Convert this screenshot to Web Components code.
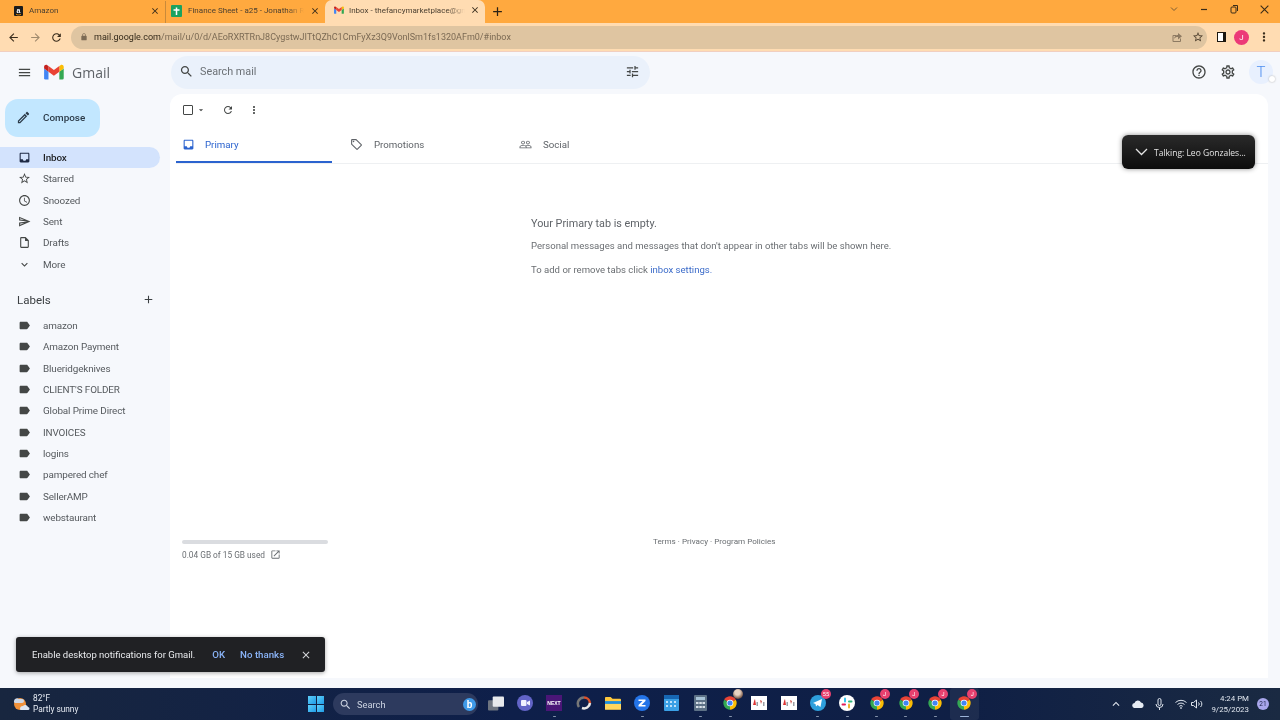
<!DOCTYPE html>
<html lang="en">
  <head>
    <meta charset="UTF-8" />
    <title>Inbox - Gmail</title>
    <style>
      html, body { margin: 0; height: 100%; }
      body {
        width: 1280px;
        height: 720px;
        overflow: hidden;
        position: relative;
        display: flex;
        flex-direction: column;
        font-family: Roboto, "Liberation Sans", sans-serif;
        filter: blur(0.3px);
      }
    </style>
  </head>
  <body>
    <browser-tabs>
      <browser-tab favicon="amazon">Amazon</browser-tab>
      <browser-tab favicon="sheets" sep>Finance Sheet - a25 - Jonathan Rodriguez</browser-tab>
      <browser-tab favicon="gmail" active>Inbox - thefancymarketplace@gmail.com</browser-tab>
    </browser-tabs>
    <browser-toolbar></browser-toolbar>

    <gmail-app>
      <gmail-header slot="header"></gmail-header>
      <gmail-sidebar slot="side">
        <nav-item icon="inbox" active>Inbox</nav-item>
        <nav-item icon="star">Starred</nav-item>
        <nav-item icon="clock">Snoozed</nav-item>
        <nav-item icon="send">Sent</nav-item>
        <nav-item icon="draft">Drafts</nav-item>
        <nav-item icon="expand">More</nav-item>
        <labels-head></labels-head>
        <nav-item icon="label">amazon</nav-item>
        <nav-item icon="label">Amazon Payment</nav-item>
        <nav-item icon="label">Blueridgeknives</nav-item>
        <nav-item icon="label">CLIENT'S FOLDER</nav-item>
        <nav-item icon="label">Global Prime Direct</nav-item>
        <nav-item icon="label">INVOICES</nav-item>
        <nav-item icon="label">logins</nav-item>
        <nav-item icon="label">pampered chef</nav-item>
        <nav-item icon="label">SellerAMP</nav-item>
        <nav-item icon="label">webstaurant</nav-item>
      </gmail-sidebar>
      <mail-panel slot="main"></mail-panel>
    </gmail-app>

    <task-bar></task-bar>

    <talking-pill>Talking: Leo Gonzales...</talking-pill>
    <snack-bar>Enable desktop notifications for Gmail.</snack-bar>

    <script>
      const ICONS = {
        menu: "M3 18h18v-2H3v2zm0-5h18v-2H3v2zm0-7v2h18V6H3z",
        search: "M15.5 14h-.79l-.28-.27C15.41 12.59 16 11.11 16 9.5 16 5.91 13.09 3 9.5 3S3 5.91 3 9.5 5.91 16 9.5 16c1.61 0 3.09-.59 4.23-1.57l.27.28v.79l5 4.99L20.49 19l-4.99-5zm-6 0C7.01 14 5 11.99 5 9.5S7.01 5 9.5 5 14 7.01 14 9.5 11.99 14 9.5 14z",
        tune: "M3 17v2h6v-2H3zM3 5v2h10V5H3zm10 16v-2h8v-2h-8v-2h-2v6h2zM7 9v2H3v2h4v2h2V9H7zm14 4v-2H11v2h10zm-6-4h2V7h4V5h-4V3h-2v6z",
        help: "M11 18h2v-2h-2v2zm1-16C6.48 2 2 6.48 2 12s4.48 10 10 10 10-4.48 10-10S17.52 2 12 2zm0 18c-4.41 0-8-3.59-8-8s3.59-8 8-8 8 3.59 8 8-3.59 8-8 8zm0-14c-2.21 0-4 1.79-4 4h2c0-1.1.9-2 2-2s2 .9 2 2c0 2-3 1.75-3 5h2c0-2.25 3-2.5 3-5 0-2.21-1.79-4-4-4z",
        edit: "M3 17.25V21h3.75L17.81 9.94l-3.75-3.75L3 17.25zM5.92 19H5v-.92l9.06-9.06.92.92L5.92 19zM20.71 7.04c.39-.39.39-1.02 0-1.41l-2.34-2.34c-.39-.39-1.02-.39-1.41 0l-1.83 1.83 3.75 3.75 1.83-1.83z",
        inbox: "M19 3H5c-1.1 0-2 .9-2 2v14c0 1.1.9 2 2 2h14c1.1 0 2-.9 2-2V5c0-1.1-.9-2-2-2zm0 12h-4c0 1.66-1.34 3-3 3s-3-1.34-3-3H5V5h14v10z",
        star: "M22 9.24l-7.19-.62L12 2 9.19 8.63 2 9.24l5.46 4.73L5.82 21 12 17.27 18.18 21l-1.63-7.03L22 9.24zM12 15.4l-3.76 2.27 1-4.28-3.32-2.88 4.38-.38L12 6.1l1.71 4.04 4.38.38-3.32 2.88 1 4.28L12 15.4z",
        clock: "M11.99 2C6.47 2 2 6.48 2 12s4.47 10 9.99 10C17.52 22 22 17.52 22 12S17.52 2 11.99 2zM12 20c-4.42 0-8-3.58-8-8s3.58-8 8-8 8 3.58 8 8-3.58 8-8 8zm.5-13H11v6l5.25 3.15.75-1.23-4.5-2.67z",
        send: "M4.01 6.03l7.51 3.22-7.52-1 .01-2.22m7.5 8.72L4 17.97v-2.22l7.51-1M2.01 3L2 10l15 2-15 2 .01 7L23 12 2.01 3z",
        draft: "M14 2H6c-1.1 0-1.99.9-1.99 2L4 20c0 1.1.89 2 1.99 2H18c1.1 0 2-.9 2-2V8l-6-6zm4 18H6V4h7v5h5v11z",
        expand: "M16.59 8.59L12 13.17 7.41 8.59 6 10l6 6 6-6z",
        label: "M17.63 5.84C17.27 5.33 16.67 5 16 5L5 5.01C3.9 5.01 3 5.9 3 7v10c0 1.1.9 1.99 2 1.99L16 19c.67 0 1.27-.33 1.63-.84L22 12l-4.37-6.16z",
        add: "M19 13h-6v6h-2v-6H5v-2h6V5h2v6h6v2z",
        refresh: "M17.65 6.35C16.2 4.9 14.21 4 12 4c-4.42 0-7.99 3.58-7.99 8s3.57 8 7.99 8c3.73 0 6.84-2.55 7.73-6h-2.08c-.82 2.33-3.04 4-5.65 4-3.31 0-6-2.69-6-6s2.69-6 6-6c1.66 0 3.14.69 4.22 1.78L13 11h7V4l-2.35 2.35z",
        dots: "M12 8c1.1 0 2-.9 2-2s-.9-2-2-2-2 .9-2 2 .9 2 2 2zm0 2c-1.1 0-2 .9-2 2s.9 2 2 2 2-.9 2-2-.9-2-2-2zm0 6c-1.1 0-2 .9-2 2s.9 2 2 2 2-.9 2-2-.9-2-2-2z",
        tag: "M21.41 11.58l-9-9C12.05 2.22 11.55 2 11 2H4c-1.1 0-2 .9-2 2v7c0 .55.22 1.05.59 1.42l9 9c.36.36.86.58 1.41.58s1.05-.22 1.41-.59l7-7c.37-.36.59-.86.59-1.41s-.23-1.06-.59-1.42zM13 20.01L4 11V4h7v-.01l9 9-7 7.02zM6.5 5a1.5 1.5 0 1 0 0 3 1.5 1.5 0 0 0 0-3z",
        people: "M16.5 13c-1.2 0-3.07.34-4.5 1-1.43-.67-3.3-1-4.5-1C5.33 13 1 14.08 1 16.25V19h22v-2.75c0-2.17-4.33-3.25-6.5-3.25zm-4 4.5h-10v-1.25c0-.54 2.56-1.75 5-1.75s5 1.21 5 1.75v1.25zm9 0H14v-1.25c0-.46-.2-.86-.52-1.22.88-.3 1.96-.53 3.02-.53 2.44 0 5 1.21 5 1.75v1.25zM7.5 12c1.93 0 3.5-1.57 3.5-3.5S9.43 5 7.5 5 4 6.57 4 8.5 5.57 12 7.5 12zm0-5.5c1.1 0 2 .9 2 2s-.9 2-2 2-2-.9-2-2 .9-2 2-2zm9 5.5c1.93 0 3.5-1.57 3.5-3.5S18.43 5 16.5 5 13 6.57 13 8.5s1.57 3.5 3.5 3.5zm0-5.5c1.1 0 2 .9 2 2s-.9 2-2 2-2-.9-2-2 .9-2 2-2z",
        open: "M19 19H5V5h7V3H5c-1.11 0-2 .9-2 2v14c0 1.1.89 2 2 2h14c1.1 0 2-.9 2-2v-7h-2v7zM14 3v2h3.59l-9.83 9.83 1.41 1.41L19 6.41V10h2V3h-7z",
        close: "M19 6.41L17.59 5 12 10.59 6.41 5 5 6.41 10.59 12 5 17.59 6.41 19 12 13.41 17.59 19 19 17.59 13.41 12z",
        back: "M20 11H7.83l5.59-5.59L12 4l-8 8 8 8 1.41-1.41L7.83 13H20v-2z",
        forward: "M12 4l-1.41 1.41L16.17 11H4v2h12.17l-5.58 5.59L12 20l8-8z",
        lock: "M18 8h-1V6c0-2.76-2.24-5-5-5S7 3.24 7 6v2H6c-1.1 0-2 .9-2 2v10c0 1.1.9 2 2 2h12c1.1 0 2-.9 2-2V10c0-1.1-.9-2-2-2zM9 6c0-1.66 1.34-3 3-3s3 1.34 3 3v2H9V6z",
        share: "M5 8h5v2H5v10h13v-5h2v5a2 2 0 0 1-2 2H5a2 2 0 0 1-2-2V10a2 2 0 0 1 2-2zm9 1V4l8 6.500-8 6.500v-5c-4 0-6 1-8 4 .5-4.500 3-8 8-8.500z",
        carrot: "M7 10l5 5 5-5z",
        gear: "M19.43 12.98c.04-.32.07-.64.07-.98s-.03-.66-.07-.98l2.11-1.65c.19-.15.24-.42.12-.64l-2-3.46c-.12-.22-.39-.3-.61-.22l-2.49 1c-.52-.4-1.08-.73-1.69-.98l-.38-2.65A.49.49 0 0 0 14 2h-4c-.25 0-.46.18-.49.42l-.38 2.65c-.61.25-1.17.59-1.69.98l-2.49-1c-.23-.09-.49 0-.61.22l-2 3.46c-.13.22-.07.49.12.64l2.11 1.65c-.04.32-.07.65-.07.98s.03.66.07.98l-2.11 1.65c-.19.15-.24.42-.12.64l2 3.46c.12.22.39.3.61.22l2.49-1c.52.4 1.08.73 1.69.98l.38 2.65c.03.24.24.42.49.42h4c.25 0 .46-.18.49-.42l.38-2.65c.61-.25 1.17-.59 1.69-.98l2.49 1c.23.09.49 0 .61-.22l2-3.46c.12-.22.07-.49-.12-.64l-2.11-1.65zm-1.98-1.71c.04.31.05.52.05.73s-.02.43-.05.73l-.14 1.13.89.7 1.08.84-.7 1.21-1.27-.51-1.04-.42-.9.68c-.43.32-.84.56-1.25.73l-1.06.43-.16 1.13-.2 1.35h-1.4l-.19-1.35-.16-1.13-1.06-.43c-.43-.18-.83-.41-1.23-.71l-.91-.7-1.06.43-1.27.51-.7-1.21 1.08-.84.89-.7-.14-1.13c-.03-.31-.05-.54-.05-.74s.02-.43.05-.73l.14-1.13-.89-.7-1.08-.84.7-1.21 1.27.51 1.04.42.9-.68c.43-.32.84-.56 1.25-.73l1.06-.43.16-1.13.2-1.35h1.39l.19 1.35.16 1.13 1.06.43c.43.18.83.41 1.23.71l.91.7 1.06-.43 1.27-.51.7 1.21-1.07.85-.89.7.14 1.13zM12 8c-2.21 0-4 1.79-4 4s1.79 4 4 4 4-1.79 4-4-1.79-4-4-4zm0 6c-1.1 0-2-.9-2-2s.9-2 2-2 2 .9 2 2-.9 2-2 2z",
      };

      const GMAIL_LOGO = `<svg viewBox="0 0 52 42" width="20" height="16">
        <path fill="#4285f4" d="M3.500 41h8V20.500L0 12v25.500A3.500 3.500 0 0 0 3.500 41"/>
        <path fill="#34a853" d="M40 41h8a3.500 3.500 0 0 0 3.500-3.500V12L40 20.500"/>
        <path fill="#fbbc04" d="M40 5.500v15L51.500 12V7.500c0-4.300-4.900-6.700-8.300-4.200"/>
        <path fill="#ea4335" d="M11.500 20.500v-15L25.750 16 40 5.500v15L25.750 31"/>
        <path fill="#c5221f" d="M0 7.500V12l11.500 8.500v-15L8.300 3.300C4.900.8 0 3.200 0 7.500"/>
      </svg>`;

      const CHROME_LOGO = `<svg viewBox="0 0 24 24" width="100%" height="100%">
        <path fill="#ea4335" d="M12 12 3.340 7A10 10 0 0 1 20.660 7Z"/>
        <path fill="#fbbc04" d="M12 12 20.660 7A10 10 0 0 1 12 22Z"/>
        <path fill="#34a853" d="M12 12 12 22A10 10 0 0 1 3.340 7Z"/>
        <circle cx="12" cy="12" r="5" fill="#fff"/><circle cx="12" cy="12" r="3.900" fill="#4285f4"/>
      </svg>`;

      class GIcon extends HTMLElement {
        constructor() {
          super();
          this.attachShadow({ mode: "open" });
        }
        connectedCallback() {
          const size = this.getAttribute("size") || 14;
          const path = ICONS[this.getAttribute("name")];
          this.shadowRoot.innerHTML = `
            <style>
              :host { display: inline-flex; flex: none; width: ${size}px; height: ${size}px; color: inherit; }
              svg { display: block; width: 100%; height: 100%; fill: currentColor; }
            </style>
            <svg viewBox="0 0 24 24"><path d="${path}"></path></svg>`;
        }
      }
      customElements.define("g-icon", GIcon);

      class BrowserTabs extends HTMLElement {
        constructor() {
          super();
          this.attachShadow({ mode: "open" });
          this.shadowRoot.innerHTML = `
            <style>
              :host { display: flex; flex: none; height: 23px; background: #ffa93f; align-items: flex-end; padding: 0 1px 0 5px; color: #3c3327; }
              .plus { margin-left: 5px; align-self: center; color: #2b2114; display: flex; }
              .win { margin-left: auto; display: flex; align-self: flex-start; height: 18px; align-items: center; color: #5b4426; }
              .win span { width: 30px; display: flex; justify-content: center; }
            </style>
            <slot></slot>
            <div class="plus"><g-icon name="add" size="15"></g-icon></div>
            <div class="win">
              <span><svg width="10" height="10" viewBox="0 0 10 10" fill="none" stroke="#7a5c33" stroke-width="1"><path d="M2 3.500 5 6.500 8 3.500"/></svg></span>
              <span><svg width="10" height="10" viewBox="0 0 10 10" stroke="#3a2c18" stroke-width="1.200"><path d="M2 5.500H8"/></svg></span>
              <span><svg width="10" height="10" viewBox="0 0 10 10" fill="none" stroke="#3a2c18" stroke-width="1"><rect x="2" y="3" width="5" height="6" rx="1"/><path d="M4 1.500H8.500V7"/></svg></span>
              <span><svg width="11" height="11" viewBox="0 0 10 10" stroke="#3a2c18" stroke-width="1"><path d="M1.500 1.500 8.500 8.500M8.500 1.500 1.500 8.500"/></svg></span>
            </div>`;
        }
      }
      customElements.define("browser-tabs", BrowserTabs);

      const FAVICONS = {
        amazon: `<svg width="9" height="10" viewBox="0 0 9 10"><rect width="9" height="10" rx="1" fill="#1c1c1c"/><text x="4.500" y="6.800" font-size="7" font-family="Liberation Sans" font-weight="700" fill="#fff" text-anchor="middle">a</text><path d="M2 8.300c1.500.8 3.500.8 5 0" stroke="#f90" stroke-width=".8" fill="none"/></svg>`,
        sheets: `<svg width="11" height="12" viewBox="0 0 11 12"><rect width="11" height="12" rx="1" fill="#1aa260"/><path d="M5.500 2.500V10M2.500 5H8.500" stroke="#fff" stroke-width="1.500"/></svg>`,
        gmail: GMAIL_LOGO.replace('width="20" height="16"', 'width="10" height="8"'),
      };

      class BrowserTab extends HTMLElement {
        constructor() {
          super();
          this.attachShadow({ mode: "open" });
        }
        connectedCallback() {
          const active = this.hasAttribute("active");
          const sep = this.hasAttribute("sep");
          this.shadowRoot.innerHTML = `
            <style>
              :host { display: flex; align-items: center; gap: ${active ? 5 : 6}px; width: 160px; box-sizing: border-box; height: ${active ? 23 : 22}px; padding: 0 5px 3px ${sep ? 5 : 9}px; font-size: 8px; color: #4a3f30; position: relative; background: ${active ? "#ffdcb2" : "transparent"}; border-radius: ${active ? "7px 7px 0 0" : "0"}; border-left: ${sep ? "1px solid #c98a3a" : "0"}; }
              .title { flex: 1; min-width: 0; white-space: nowrap; overflow: hidden; -webkit-mask-image: linear-gradient(90deg, #000 85%, transparent); mask-image: linear-gradient(90deg, #000 85%, transparent); }
              g-icon { color: #33291a; }
              .fav { display: flex; flex: none; }
            </style>
            <span class="fav">${FAVICONS[this.getAttribute("favicon")]}</span>
            <span class="title"><slot></slot></span>
            <g-icon name="close" size="10"></g-icon>`;
        }
      }
      customElements.define("browser-tab", BrowserTab);

      class BrowserToolbar extends HTMLElement {
        constructor() {
          super();
          this.attachShadow({ mode: "open" });
          this.shadowRoot.innerHTML = `
            <style>
              :host { display: flex; flex: none; height: 28px; box-sizing: content-box; align-items: center; background: #ffdcb2; border-bottom: 1px solid #f1cfc0; padding: 0 7px; color: #3a2d1c; }
              .nav { display: flex; gap: 8.500px; margin-right: 8px; align-items: center; }
              .nav g-icon:nth-child(2) { color: #a08a6c; }
              .url { flex: none; width: 1136px; height: 23px; border-radius: 12px; background: #dfc5a1; display: flex; align-items: center; padding: 0 3px 0 9px; box-sizing: border-box; gap: 6px; font-size: 9px; color: #7b6a54; white-space: nowrap; }
              .url b { font-weight: 400; color: #33291a; }
              .url .tools { margin-left: auto; display: flex; gap: 9px; align-items: center; color: #8d7a62; }
              .url .tools g-icon:last-child { color: #4d3f2d; }
              .right { display: flex; align-items: center; margin-left: 10px; gap: 8px; }
              .avatar { width: 15px; height: 15px; border-radius: 50%; background: #ec3a78; color: #fff; font-size: 8px; display: flex; align-items: center; justify-content: center; }
              .panel { width: 5px; height: 8px; border: 1.500px solid #1d1810; border-right-width: 3.500px; background: #fff; }
            </style>
            <div class="nav">
              <g-icon name="back" size="13"></g-icon>
              <g-icon name="forward" size="13"></g-icon>
              <g-icon name="refresh" size="13"></g-icon>
            </div>
            <div class="url">
              <g-icon name="lock" size="8"></g-icon>
              <span><b>mail.google.com</b>/mail/u/0/d/AEoRXRTRnJ8CygstwJITtQZhC1CmFyXz3Q9VonlSm1fs1320AFm0/#inbox</span>
              <div class="tools"><g-icon name="share" size="12"></g-icon><g-icon name="star" size="12"></g-icon></div>
            </div>
            <div class="right">
              <div class="panel"></div>
              <div class="avatar">J</div>
              <g-icon name="dots" size="14"></g-icon>
            </div>`;
        }
      }
      customElements.define("browser-toolbar", BrowserToolbar);

      class GmailApp extends HTMLElement {
        constructor() {
          super();
          this.attachShadow({ mode: "open" });
          this.shadowRoot.innerHTML = `
            <style>
              :host { display: grid; flex: 1; min-height: 0; grid-template-columns: 170px 1098px 12px; grid-template-rows: 42px 584px 10px; background: #f6f8fc; }
              .head { grid-column: 1 / -1; }
              .side { grid-row: 2 / 4; }
            </style>
            <div class="head"><slot name="header"></slot></div>
            <div class="side"><slot name="side"></slot></div>
            <slot name="main"></slot>`;
        }
      }
      customElements.define("gmail-app", GmailApp);

      class GmailHeader extends HTMLElement {
        constructor() {
          super();
          this.attachShadow({ mode: "open" });
          this.shadowRoot.innerHTML = `
            <style>
              :host { display: flex; height: 40px; align-items: center; color: #444746; }
              .brand { width: 171px; flex: none; display: flex; align-items: center; padding-left: 17px; box-sizing: border-box; }
              .brand g-icon { margin-right: 12px; }
              .brand span { font: 400 14px "Open Sans", Roboto, sans-serif; color: #5f6368; margin-left: 8px; }
              .brand svg { display: block; }
              .search { width: 479px; height: 33px; background: #eaf1fb; border-radius: 17px; display: flex; align-items: center; padding: 0 10px 1px 8px; box-sizing: border-box; font-size: 10.800px; color: #6b7075; }
              .search g-icon:first-child { margin: 0 6px 0 0; color: #444746; }
              .search g-icon:last-child { color: #444746; }
              .search span { flex: 1; }
              .tools { margin-left: auto; display: flex; align-items: center; padding-right: 7px; }
              .tools g-icon:nth-child(2) { margin: 0 13px 0 13px; }
              .me { width: 24px; height: 24px; border-radius: 50%; background: #e8f0fe; color: #4c8df0; font-size: 15px; font-weight: 300; display: flex; align-items: center; justify-content: center; position: relative; }
              .me i { position: absolute; right: -2px; bottom: 2px; width: 6px; height: 6px; background: #fff; border-radius: 50%; box-shadow: 0 0 2px #aaa; }
            </style>
            <div class="brand">
              <g-icon name="menu" size="15"></g-icon>
              ${GMAIL_LOGO}
              <span>Gmail</span>
            </div>
            <div class="search">
              <g-icon name="search" size="15"></g-icon>
              <span>Search mail</span>
              <g-icon name="tune" size="15"></g-icon>
            </div>
            <div class="tools">
              <g-icon name="help" size="16"></g-icon>
              <g-icon name="gear" size="16"></g-icon>
              <div class="me">T<i></i></div>
            </div>`;
        }
      }
      customElements.define("gmail-header", GmailHeader);

      class GmailSidebar extends HTMLElement {
        constructor() {
          super();
          this.attachShadow({ mode: "open" });
          this.shadowRoot.innerHTML = `
            <style>
              :host { display: block; padding-top: 5px; }
              .compose { width: 95px; height: 38px; margin: 0 0 10px 5px; border-radius: 13px; background: #c2e7ff; display: flex; align-items: center; padding: 0 0 1px 11px; box-sizing: border-box; gap: 12px; font-size: 9.900px; font-weight: 500; color: #2b3a48; }
            </style>
            <div class="compose"><g-icon name="edit" size="15"></g-icon>Compose</div>
            <slot></slot>`;
        }
      }
      customElements.define("gmail-sidebar", GmailSidebar);

      class NavItem extends HTMLElement {
        constructor() {
          super();
          this.attachShadow({ mode: "open" });
        }
        connectedCallback() {
          const active = this.hasAttribute("active");
          this.shadowRoot.innerHTML = `
            <style>
              :host { display: flex; align-items: center; width: 160px; height: 21.330px; box-sizing: border-box; padding-left: 17.500px; gap: 12.500px; font-size: 9.900px; letter-spacing: -0.12px; color: ${active ? "#1f2124" : "#55595d"}; font-weight: ${active ? 500 : 400}; border-radius: 0 11px 11px 0; background: ${active ? "#d3e3fd" : "transparent"}; }
              g-icon { color: ${active ? "#1f2a44" : "#444746"}; }
            </style>
            <g-icon name="${this.getAttribute("icon")}" size="13"></g-icon>
            <slot></slot>`;
        }
      }
      customElements.define("nav-item", NavItem);

      class LabelsHead extends HTMLElement {
        constructor() {
          super();
          this.attachShadow({ mode: "open" });
          this.shadowRoot.innerHTML = `
            <style>
              :host { display: flex; align-items: center; width: 155px; box-sizing: border-box; height: 40px; padding: 10px 0 0 17px; font-size: 11.500px; color: #3c4043; justify-content: space-between; }
            </style>
            <span>Labels</span><g-icon name="add" size="13"></g-icon>`;
        }
      }
      customElements.define("labels-head", LabelsHead);

      class MailTab extends HTMLElement {
        constructor() {
          super();
          this.attachShadow({ mode: "open" });
        }
        connectedCallback() {
          const active = this.hasAttribute("active");
          this.shadowRoot.innerHTML = `
            <style>
              :host { display: flex; align-items: center; box-sizing: border-box; width: ${this.getAttribute("w") || 169}px; height: 36px; padding: 0 0 ${active ? 0 : 1}px ${this.getAttribute("p") || 6}px; gap: ${active ? 10 : 11}px; font-size: 9.700px; color: ${active ? "#2b63cf" : "#5f6368"}; position: relative; }
              :host([active]) { border-bottom: 2px solid #2b63cf; }
            </style>
            <g-icon name="${this.getAttribute("icon")}" size="13"></g-icon>
            <slot></slot>`;
        }
      }
      customElements.define("mail-tab", MailTab);

      class MailPanel extends HTMLElement {
        constructor() {
          super();
          this.attachShadow({ mode: "open" });
          this.shadowRoot.innerHTML = `
            <style>
              :host { display: flex; flex-direction: column; background: #fff; border-radius: 12px 12px 0 0; color: #5f6368; padding: 0 0 0 6px; height: 584px; box-sizing: border-box; }
              .bar { display: flex; align-items: center; height: 32px; padding: 0 0 1px 7px; box-sizing: border-box; margin-bottom: 1px; color: #444746; }
              .check { width: 8px; height: 8px; border: 1px solid #444746; border-radius: 1px; margin-left: 0; }
              .bar g-icon { color: #444746; }
              .tabs { display: flex; border-bottom: 1px solid #eef0f2; margin-right: 0; }
              .empty { padding: 53px 0 0 355px; }
              .empty h2 { margin: 0 0 8px; font-weight: 400; font-size: 10.800px; color: #5f6368; line-height: 14px; }
              .empty p { margin: 0 0 10px; font-size: 9.550px; line-height: 13.500px; color: #6a6e72; }
              .empty a { color: #3b6bc9; text-decoration: none; }
              .foot { display: flex; align-items: flex-start; margin-top: 254px; padding-left: 6px; }
              .storage { width: 146px; flex: none; font-size: 8.300px; color: #6a6e72; }
              .meter { height: 4px; background: #dadce0; border-radius: 2px; margin-bottom: 5px; }
              .use { display: flex; align-items: center; gap: 5px; }
              .links { font-size: 8.100px; margin: -3px 0 0 325px; line-height: 8px; color: #6a6e72; }
            </style>
            <div class="bar">
              <div class="check"></div>
              <g-icon name="carrot" size="10" style="margin:0 0 0 3px"></g-icon>
              <g-icon name="refresh" size="12" style="margin-left:16px"></g-icon>
              <g-icon name="dots" size="12" style="margin-left:14px"></g-icon>
            </div>
            <div class="tabs">
              <mail-tab active icon="inbox" w="156">Primary</mail-tab>
              <mail-tab icon="tag" w="169" p="18">Promotions</mail-tab>
              <mail-tab icon="people" w="169" p="18">Social</mail-tab>
            </div>
            <div class="empty">
              <h2>Your Primary tab is empty.</h2>
              <p>Personal messages and messages that don't appear in other tabs will be shown here.</p>
              <p>To add or remove tabs click <a>inbox settings.</a></p>
            </div>
            <div class="foot">
              <div class="storage">
                <div class="meter"></div>
                <div class="use"><span>0.04 GB of 15 GB used</span><g-icon name="open" size="11"></g-icon></div>
              </div>
              <div class="links">Terms · Privacy · Program Policies</div>
            </div>`;
        }
      }
      customElements.define("mail-panel", MailPanel);

      class TalkingPill extends HTMLElement {
        constructor() {
          super();
          this.attachShadow({ mode: "open" });
          this.shadowRoot.innerHTML = `
            <style>
              :host { position: absolute; left: 1122px; top: 135px; width: 133px; height: 34px; box-sizing: border-box; border-radius: 6px; background: linear-gradient(#2a2a2a, #0c0c0c); box-shadow: 0 0 5px rgba(0,0,0,.45); display: flex; align-items: center; padding-left: 13px; gap: 6px; font: 8.500px "Open Sans", sans-serif; color: #e4e4e4; white-space: nowrap; }
              svg { flex: none; }
            </style>
            <svg width="13" height="8" viewBox="0 0 13 8" fill="none" stroke="#e4e4e4" stroke-width="1.300"><path d="M1 1 6.500 6.500 12 1"/></svg>
            <slot></slot>`;
        }
      }
      customElements.define("talking-pill", TalkingPill);

      class SnackBar extends HTMLElement {
        constructor() {
          super();
          this.attachShadow({ mode: "open" });
          this.shadowRoot.innerHTML = `
            <style>
              :host { position: absolute; left: 16px; top: 637px; width: 309px; height: 35px; box-sizing: border-box; border-radius: 3px; background: #202124; box-shadow: 0 1px 4px rgba(0,0,0,.35); display: flex; align-items: center; padding-left: 16px; font-size: 9.500px; color: #e8eaed; white-space: nowrap; }
              a { color: #8ab4f8; font-weight: 500; font-size: 9.700px; }
              .ok { margin-left: 17px; }
              .no { margin-left: 15px; }
              g-icon { margin-left: 16px; color: #d5d7da; }
            </style>
            <slot></slot>
            <a class="ok">OK</a><a class="no">No thanks</a>
            <g-icon name="close" size="12"></g-icon>`;
        }
      }
      customElements.define("snack-bar", SnackBar);

      class TaskIcon extends HTMLElement {
        constructor() {
          super();
          this.attachShadow({ mode: "open" });
        }
        connectedCallback() {
          const badge = this.getAttribute("badge");
          const dot = this.hasAttribute("dot");
          const on = this.hasAttribute("on");
          const photo = this.hasAttribute("photo");
          this.shadowRoot.innerHTML = `
            <style>
              :host { display: flex; flex: none; width: 29.300px; height: 32px; align-items: center; justify-content: center; position: relative; ${on ? "background: rgba(255,255,255,.06); border-radius: 3px;" : ""} }
              .i { width: 16px; height: 16px; margin-top: -2px; display: flex; align-items: center; justify-content: center; position: relative; }
              .b { position: absolute; right: -5px; top: -6px; min-width: 10px; height: 10px; border-radius: 50%; background: ${photo ? "radial-gradient(circle at 45% 35%, #e9d3c2 30%, #6b4a3a 75%)" : "#e8416f"}; color: #fff; font-size: 5.500px; display: flex; align-items: center; justify-content: center; }
              .d { position: absolute; left: 50%; bottom: 3px; width: ${on ? 9 : 3}px; height: 1.500px; margin-left: ${on ? -4.5 : -1.5}px; border-radius: 1px; background: ${on ? "#9db4d8" : "#8593ab"}; }
            </style>
            <div class="i"><slot></slot>${badge ? `<span class="b">${badge}</span>` : ""}</div>
            ${dot || on ? '<span class="d"></span>' : ""}`;
        }
      }
      customElements.define("task-icon", TaskIcon);

      const FLAGS = `<svg width="16" height="14" viewBox="0 0 16 14"><rect width="16" height="14" fill="#fff"/><path fill="#d33" d="M2 9c1-3 1-5 2-6l1 6z"/><path fill="#c9504a" d="M9 4l1 4 1-3z"/><path fill="#9aa0a6" d="M5.500 6h1.500v4H5.500zM12 6h1.500v4H12z"/></svg>`;

      class TaskBar extends HTMLElement {
        constructor() {
          super();
          this.attachShadow({ mode: "open" });
          this.shadowRoot.innerHTML = `
            <style>
              :host { display: flex; flex: none; height: 32px; align-items: center; background: linear-gradient(90deg, #18263f, #0e1f4a 40%, #0f1f45 75%, #1a2a42); color: #e6ebf3; font-size: 8.300px; position: relative; }
              .weather { display: flex; align-items: center; gap: 3px; width: 308px; padding-left: 12px; box-sizing: border-box; flex: none; line-height: 11px; }
              .win { flex: none; width: 16px; height: 16px; display: grid; grid-template-columns: 1fr 1fr; gap: 1px; }
              .win i { background: linear-gradient(135deg, #5fd0fa, #1f9be6); }
              .search { width: 145px; flex: none; height: 22px; margin: 0 3px 0 9px; border-radius: 11px; background: #2d3a5e; display: flex; align-items: center; padding: 0 2px 0 6px; box-sizing: border-box; gap: 5px; font-size: 9.300px; color: #cdd4e2; }
              .search span { flex: 1; }
              .bing { width: 13px; height: 13px; border-radius: 50%; background: #3f9ae8; color: #fff; font: 700 10px/13px Roboto, sans-serif; text-align: center; }
              .apps { display: flex; }
              .tray { position: absolute; right: 0; top: 0; height: 32px; width: 172px; display: flex; align-items: center; box-sizing: border-box; color: #dfe5ee; }
              .tray > * { flex: none; }
              .clock { text-align: right; line-height: 11px; width: 38px; margin-left: 8px; font-size: 7.900px; }
              .count { width: 12px; height: 12px; border-radius: 50%; background: #a9a7ec; color: #1b2245; font-size: 6.500px; display: flex; align-items: center; justify-content: center; margin-left: 8px; }
            </style>
            <div class="weather">
              <svg width="18" height="16" viewBox="0 0 18 16"><circle cx="8" cy="8" r="6" fill="#f0913a"/><path d="M2 5a3 3 0 0 1 5-2h3a2 2 0 0 1 0 4H3a1.500 1.500 0 0 1-1-2z" fill="#cfd8e6"/><path d="M8 13a3 3 0 0 1 3-3 3 3 0 0 1 5 1 1.500 1.500 0 0 1 0 3H9a1 1 0 0 1-1-1z" fill="#dde5f1"/></svg>
              <div>82°F<br />Partly sunny</div>
            </div>
            <div class="win"><i></i><i></i><i></i><i></i></div>
            <div class="search">
              <g-icon name="search" size="13"></g-icon>
              <span>Search</span>
              <div class="bing">b</div>
            </div>
            <div class="apps">
              <task-icon><svg width="17" height="15" viewBox="0 0 17 15"><rect y="4" width="11" height="11" rx="1" fill="#6d7480"/><rect x="5" width="12" height="11" rx="1" fill="#e7e9ec"/></svg></task-icon>
              <task-icon><svg width="16" height="16" viewBox="0 0 16 16"><circle cx="8" cy="8" r="8" fill="#6264c7"/><rect x="4" y="5" width="5.500" height="6" rx="1" fill="#f0f0ff"/><path d="M10 7l3-1.500v5L10 9z" fill="#f0f0ff"/></svg></task-icon>
              <task-icon dot><svg width="16" height="16" viewBox="0 0 16 16"><rect width="16" height="16" fill="#4a1677"/><text x="8" y="10" font-size="5" font-weight="700" font-family="Liberation Sans" fill="#fff" text-anchor="middle">NEXT</text></svg></task-icon>
              <task-icon><svg width="16" height="16" viewBox="0 0 16 16" fill="none" stroke-width="2.500"><path d="M3 12A6 6 0 0 1 8 2.500" stroke="#777"/><path d="M8 2.500A6 6 0 0 1 14 8" stroke="#d9512c"/><path d="M14 8a6 6 0 0 1-8 5" stroke="#e8e8e8"/></svg></task-icon>
              <task-icon><svg width="17" height="14" viewBox="0 0 17 14"><path d="M0 1.500A1 1 0 0 1 1 .5h5l2 2h8a1 1 0 0 1 1 1V13a1 1 0 0 1-1 1H1a1 1 0 0 1-1-1z" fill="#ffc83d"/><rect y="5" width="17" height="3" fill="#1d8fe0"/><rect y="8" width="17" height="6" fill="#ffd65c"/></svg></task-icon>
              <task-icon dot><svg width="16" height="16" viewBox="0 0 16 16"><circle cx="8" cy="8" r="8" fill="#2474e8"/><path d="M4.500 4.500h7v1.500L7.500 10h4v1.500h-7V10l4-4h-4z" fill="#fff"/></svg></task-icon>
              <task-icon><svg width="15" height="16" viewBox="0 0 15 16"><rect width="15" height="16" rx="1" fill="#3aa0e6"/><rect y="0" width="15" height="4" fill="#1767b4"/><g fill="#bfe1fb"><rect x="2" y="6" width="2" height="2"/><rect x="6" y="6" width="2" height="2"/><rect x="10" y="6" width="2" height="2"/><rect x="2" y="10" width="2" height="2"/><rect x="6" y="10" width="2" height="2"/><rect x="10" y="10" width="2" height="2"/></g></svg></task-icon>
              <task-icon dot><svg width="13" height="16" viewBox="0 0 13 16"><rect width="13" height="16" rx="1" fill="#5d7186"/><rect x="2" y="2" width="9" height="3" fill="#a8c4d8"/><g fill="#d6dee6"><rect x="2" y="7" width="2.500" height="2"/><rect x="5.300" y="7" width="2.500" height="2"/><rect x="8.500" y="7" width="2.500" height="2"/><rect x="2" y="11" width="2.500" height="2"/><rect x="5.300" y="11" width="2.500" height="2"/><rect x="8.500" y="11" width="2.500" height="2"/></g></svg></task-icon>
              <task-icon dot photo badge=" ">${CHROME_LOGO}</task-icon>
              <task-icon>${FLAGS}</task-icon>
              <task-icon>${FLAGS}</task-icon>
              <task-icon dot badge="55"><svg width="16" height="16" viewBox="0 0 16 16"><circle cx="8" cy="8" r="8" fill="#2e9fdc"/><path d="M3 8l9-4-1.500 8-3-2-1.500 1.500-.5-2.500z" fill="#fff"/></svg></task-icon>
              <task-icon dot><svg width="16" height="16" viewBox="0 0 16 16"><circle cx="8" cy="8" r="8" fill="#fff"/><g stroke-width="2" stroke-linecap="round"><path d="M6 3.500v3" stroke="#36c5f0"/><path d="M12.500 6.500h-2.500" stroke="#2eb67d"/><path d="M10 12.500v-3" stroke="#ecb22e"/><path d="M3.500 9.500h2.500" stroke="#e01e5a"/></g></svg></task-icon>
              <task-icon dot badge="J">${CHROME_LOGO}</task-icon>
              <task-icon dot badge="J">${CHROME_LOGO}</task-icon>
              <task-icon dot badge="J">${CHROME_LOGO}</task-icon>
              <task-icon on badge="J">${CHROME_LOGO}</task-icon>
            </div>
            <div class="tray">
              <g-icon name="expand" size="14" style="transform:rotate(180deg);margin-left:1px"></g-icon>
              <svg style="margin-left:9px" width="12" height="8" viewBox="0 0 12 8"><path d="M3 8a2.500 2.500 0 0 1-.5-5A3.500 3.500 0 0 1 9 2.500 2.800 2.800 0 0 1 9.500 8z" fill="#e6ebf3"/></svg>
              <svg style="margin-left:11px" width="9" height="13" viewBox="0 0 9 13" fill="none" stroke="#dfe5ee"><rect x="3" y=".5" width="3" height="7" rx="1.500"/><path d="M1 6a3.500 3.500 0 0 0 7 0M4.500 9.500V12"/></svg>
              <svg style="margin-left:11px" width="12" height="10" viewBox="0 0 12 10" fill="none" stroke="#dfe5ee"><path d="M.5 3.500a8 8 0 0 1 11 0M2.500 5.500a5 5 0 0 1 7 0M4.300 7.300a2.500 2.500 0 0 1 3.400 0"/><circle cx="6" cy="9" r=".5"/></svg>
              <svg style="margin-left:4px" width="12" height="10" viewBox="0 0 12 10" fill="none" stroke="#dfe5ee"><path d="M.5 3.500h2L5.500 1v8L2.500 6.500h-2zM7.500 3.500a2 2 0 0 1 0 3M9.500 2a4 4 0 0 1 0 6"/></svg>
              <div class="clock">4:24 PM<br />9/25/2023</div>
              <div class="count">21</div>
            </div>`;
        }
      }
      customElements.define("task-bar", TaskBar);
    </script>
  </body>
</html>
